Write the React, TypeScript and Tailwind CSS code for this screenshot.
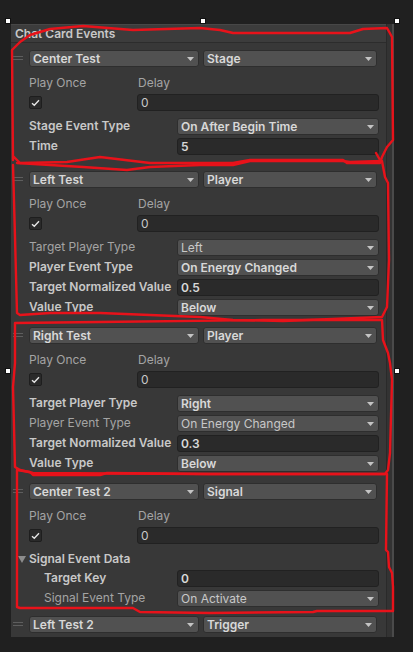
import React from "react";

type Ctl = { kind: "dd" | "tf"; value: string; bold?: boolean };
type Row = { label: string; bold?: boolean; ctl: Ctl };

function Tri() {
  return (
    <svg width="7" height="4" viewBox="0 0 7 4" className="shrink-0">
      <polygon points="0,0 7,0 3.5,4" fill="#c4c4c4" />
    </svg>
  );
}

function Dropdown({ value, bold, className }: { value: string; bold?: boolean; className?: string }) {
  return (
    <div
      className={
        "h-[17px] rounded-[3px] bg-[#515151] border border-[#2e2e2e] flex items-center pl-[3px] pr-[4px] text-[12px] leading-[15px] " +
        (bold ? "font-semibold text-[#d8d8d8] " : "text-[#c8c8c8] ") +
        (className ?? "")
      }
    >
      <span className="flex-1 truncate">{value}</span>
      <Tri />
    </div>
  );
}

function TextField({ value, bold, className }: { value: string; bold?: boolean; className?: string }) {
  return (
    <div
      className={
        "h-[17px] rounded-[3px] bg-[#2a2a2a] border border-[#212121] flex items-center pl-[3px] text-[12px] leading-[15px] " +
        (bold ? "font-semibold text-[#d8d8d8] " : "text-[#c8c8c8] ") +
        (className ?? "")
      }
    >
      {value}
    </div>
  );
}

function Label({ text, bold, className }: { text: string; bold?: boolean; className?: string }) {
  return (
    <span
      className={
        "text-[12px] leading-[16px] whitespace-nowrap " +
        (bold ? "font-semibold text-[#c8c8c8] " : "text-[#a4a4a4] ") +
        (className ?? "")
      }
    >
      {text}
    </span>
  );
}

function Handle() {
  return (
    <div className="absolute left-[2px] top-[6px] w-[10px] flex flex-col gap-[2px]">
      <div className="h-px bg-[#5e5e5e]" />
      <div className="h-px bg-[#5e5e5e]" />
    </div>
  );
}

function Checkbox() {
  return (
    <div className="w-[13px] h-[13px] rounded-[2px] bg-[#2a2a2a] border border-[#1e1e1e] flex items-center justify-center">
      <svg width="9" height="8" viewBox="0 0 9 8">
        <polyline points="1,4.2 3.3,6.3 8,1.3" fill="none" stroke="#e6e6e6" strokeWidth="1.4" />
      </svg>
    </div>
  );
}

function Header({ a, b }: { a: string; b: string }) {
  return (
    <div className="relative flex pl-[18px] pr-[9px] gap-[4px]">
      <Handle />
      <Dropdown value={a} bold className="w-[170px]" />
      <Dropdown value={b} bold className="flex-1" />
    </div>
  );
}

function PlayDelay() {
  return (
    <div className="pl-[18px] pr-[7px]">
      <div className="flex mt-[8px] h-[16px]">
        <Label text="Play Once" className="w-[109px]" />
        <Label text="Delay" />
      </div>
      <div className="flex mt-[3px] items-center">
        <div className="w-[108px] flex items-center">
          <Checkbox />
        </div>
        <TextField value="0" className="flex-1" />
      </div>
    </div>
  );
}

function Rows({ rows, indent }: { rows: Row[]; indent?: boolean }) {
  return (
    <div className="flex flex-col gap-[3px] pl-[18px] pr-[7px]">
      {rows.map((r, i) => (
        <div key={i} className="flex items-center h-[17px]">
          <div className={indent ? "w-[148px] pl-[15px] pb-[1px] flex" : "w-[148px] pb-[1px] flex"}>
            <Label text={r.label} bold={r.bold} />
          </div>
          {r.ctl.kind === "dd" ? (
            <Dropdown value={r.ctl.value} bold={r.ctl.bold} className="flex-1" />
          ) : (
            <TextField value={r.ctl.value} bold={r.ctl.bold} className="flex-1" />
          )}
        </div>
      ))}
    </div>
  );
}

function Annotations() {
  const s = { fill: "none", stroke: "#e8121a", strokeWidth: 2.4, strokeLinejoin: "round" as const, strokeLinecap: "round" as const };
  return (
    <svg className="absolute left-0 top-0 pointer-events-none" width="413" height="652" viewBox="0 0 413 652">
      <polyline
        {...s}
        points="13,160 12,50 20,42 30,35 50,29 83,26 133,30 200,28 220,30 233,33 350,33 363,29 387,28 392,37 393,140 387,147 382,157 380,163 347,163 343,160 250,160 233,163 150,163 100,157 67,162 20,163 13,156"
      />
      <polyline {...s} points="376,153 380,160" />
      <polyline
        {...s}
        points="17,163 83,167 127,170 150,167 200,165 233,165 250,161 343,161 350,162 382,161 385,177 388,183 389,260 387,307 382,317 283,321 233,320 200,317 100,313 50,313 20,315 17,313 15,237 13,165"
      />
      <polyline
        {...s}
        points="15,323 100,322 263,320 382,320 383,340 388,353 390,363 392,380 390,453 388,470 385,474 200,474 33,473 20,470 15,467 13,387 15,363 15,323"
      />
      <polyline
        {...s}
        points="17,470 30,472 33,475 100,475 107,473 210,474 387,474 386,550 388,552 389,567 392,573 393,587 393,611 317,611 313,612 210,613 140,612 133,608 20,608 17,607 17,470"
      />
    </svg>
  );
}

function Pin({ className }: { className: string }) {
  return <div className={"absolute w-[6px] h-[6px] bg-white border border-[#111] " + className} />;
}

export default function App() {
  return (
    <div className="relative w-[413px] h-[652px] bg-[#202020] overflow-hidden font-['Inter','Noto_Sans',sans-serif]">
      <div className="pt-[24px] pl-[11px] w-[394px]">
        <div className="flex h-[613px] bg-[#383838]">
          <div className="flex-1 flex flex-col">
            <div className="h-[19px] bg-[#3c3c3c] border-t border-t-[#474747] border-b border-[#2c2c2c] flex items-center pl-[4px]">
              <span className="text-[12px] font-semibold text-[#c8c8c8]">Chat Card Events</span>
            </div>
            <div className="mt-[7px]">
              <Header a="Center Test" b="Stage" />
              <PlayDelay />
              <div className="mt-[7px]">
                <Rows
                  rows={[
                    { label: "Stage Event Type", bold: true, ctl: { kind: "dd", value: "On After Begin Time", bold: true } },
                    { label: "Time", bold: true, ctl: { kind: "tf", value: "5", bold: true } },
                  ]}
                />
              </div>
            </div>
            <div className="mt-[16px]">
              <Header a="Left Test" b="Player" />
              <PlayDelay />
              <div className="mt-[7px]">
                <Rows
                  rows={[
                    { label: "Target Player Type", ctl: { kind: "dd", value: "Left" } },
                    { label: "Player Event Type", bold: true, ctl: { kind: "dd", value: "On Energy Changed", bold: true } },
                    { label: "Target Normalized Value", bold: true, ctl: { kind: "tf", value: "0.5", bold: true } },
                    { label: "Value Type", bold: true, ctl: { kind: "dd", value: "Below", bold: true } },
                  ]}
                />
              </div>
            </div>
            <div className="mt-[11px]">
              <Header a="Right Test" b="Player" />
              <PlayDelay />
              <div className="mt-[7px]">
                <Rows
                  rows={[
                    { label: "Target Player Type", bold: true, ctl: { kind: "dd", value: "Right", bold: true } },
                    { label: "Player Event Type", ctl: { kind: "dd", value: "On Energy Changed" } },
                    { label: "Target Normalized Value", bold: true, ctl: { kind: "tf", value: "0.3", bold: true } },
                    { label: "Value Type", bold: true, ctl: { kind: "dd", value: "Below", bold: true } },
                  ]}
                />
              </div>
            </div>
            <div className="mt-[11px]">
              <Header a="Center Test 2" b="Signal" />
              <PlayDelay />
              <div className="mt-[7px] flex items-center h-[17px] pl-[7px] pb-[1px]">
                <svg width="8" height="7" viewBox="0 0 8 7" className="mr-[3px]">
                  <polygon points="0,0 8,0 4,7" fill="#8c8c8c" />
                </svg>
                <Label text="Signal Event Data" bold />
              </div>
              <div className="mt-[2px]">
                <Rows
                  indent
                  rows={[
                    { label: "Target Key", bold: true, ctl: { kind: "tf", value: "0", bold: true } },
                    { label: "Signal Event Type", ctl: { kind: "dd", value: "On Activate" } },
                  ]}
                />
              </div>
            </div>
            <div className="mt-[9px]">
              <Header a="Left Test 2" b="Trigger" />
            </div>
          </div>
          <div className="w-[8px] bg-[#333333] border-l border-[#2a2a2a] border-r-2 border-r-[#4a4a4a]" />
        </div>
      </div>
      <Pin className="left-[5px] top-[18px]" />
      <Pin className="left-[200px] top-[18px]" />
      <Pin className="left-[394px] top-[18px]" />
      <Pin className="left-[5px] top-[368px]" />
      <Pin className="left-[394px] top-[368px]" />
      <Annotations />
    </div>
  );
}
